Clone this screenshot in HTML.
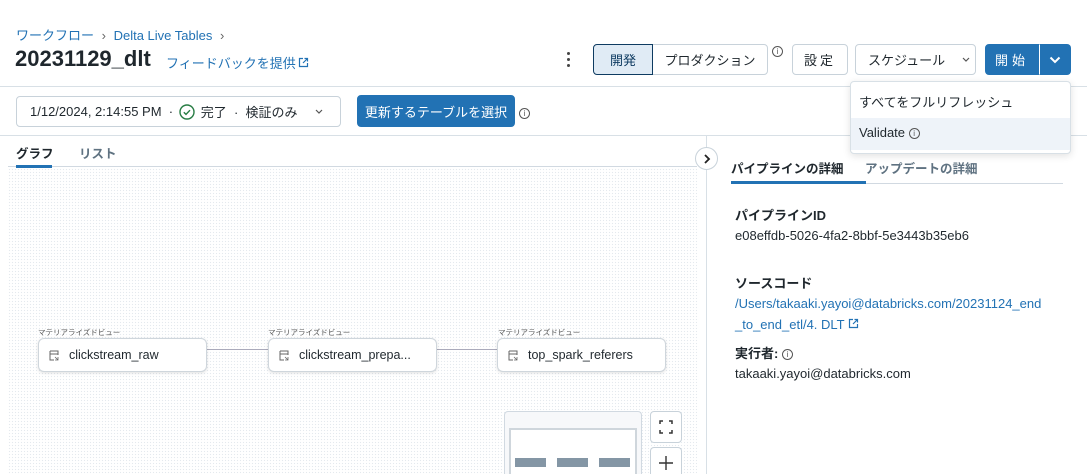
<!DOCTYPE html>
<html><head><meta charset="utf-8"><style>
*{box-sizing:border-box;margin:0;padding:0}
html{width:1087px;height:474px;overflow:hidden}
body{width:1087px;height:474px;overflow:hidden;background:#fff;font-family:"Liberation Sans","Noto Sans CJK JP",sans-serif;color:#1f272d;position:relative;font-size:13px}
.a{position:absolute;white-space:nowrap}
.link{color:#2272b4}
.btn{position:absolute;border:1px solid #c8d2da;border-radius:4px;display:flex;align-items:center;justify-content:center;font-size:13px;background:#fff;white-space:nowrap}
.blue{background:#2272b4;color:#fff;border-color:#2272b4}
.node{position:absolute;width:169px;height:34px;border:1px solid #cfd6dc;border-radius:6px;background:#fff;box-shadow:0 1px 3px rgba(0,0,0,.12);font-size:12.5px;display:flex;align-items:center;padding-left:30px}
.node svg{position:absolute;left:10px;top:11px}
.nl{position:absolute;font-size:7.5px;color:#555}
.info{display:inline-block;width:11px;height:11px;border:1px solid #555;border-radius:50%;font-size:8px;line-height:9px;text-align:center;color:#555;vertical-align:middle}
</style></head><body>
<div class="a link" style="left:16px;top:25px;font-size:13px">ワークフロー <span style="color:#666;margin:0 4px">›</span> Delta Live Tables <span style="color:#666;margin-left:4px">›</span></div>
<div class="a" style="left:15px;top:46px;font-size:22px;font-weight:bold">20231129_dlt</div>
<div class="a link" style="left:166px;top:53px;font-size:13px">フィードバックを提供<svg width="11" height="11" viewBox="0 0 11 11" style="margin-left:2px"><path d="M5 1.5H1.5v8h8V6M6.5 1.5h3v3M9.5 1.5 5 6" fill="none" stroke="#2272b4" stroke-width="1.2"/></svg></div>

<div class="a" style="left:567px;top:52px;width:4px"><div style="width:3px;height:3px;background:#444;border-radius:50%;margin-bottom:3px"></div><div style="width:3px;height:3px;background:#444;border-radius:50%;margin-bottom:3px"></div><div style="width:3px;height:3px;background:#444;border-radius:50%"></div></div>
<div class="btn" style="left:593px;top:44px;width:60px;height:31px;background:#e0ebf5;border-color:#0e3b61;border-radius:4px 0 0 4px;color:#0e3b61;z-index:2">開発</div>
<div class="btn" style="left:652px;top:44px;width:116px;height:31px;border-radius:0 4px 4px 0">プロダクション</div>
<div class="a" style="left:772px;top:43px"><span class="info">i</span></div>
<div class="btn" style="left:792px;top:44px;width:56px;height:31px;letter-spacing:3px">設定</div>
<div class="btn" style="left:855px;top:44px;width:121px;height:31px;justify-content:flex-start;padding-left:12px">スケジュール<svg width="10" height="6" style="margin-left:16px;flex:none" viewBox="0 0 10 6"><path d="M2 1l3 3 3-3" fill="none" stroke="#555" stroke-width="1.2"/></svg></div>
<div class="btn blue" style="left:985px;top:44px;width:54px;height:31px;border-radius:4px 0 0 4px;letter-spacing:4px">開始</div>
<div class="btn blue" style="left:1039px;top:44px;width:32px;height:31px;border-radius:0 4px 4px 0;border-left:1px solid #fff"><svg width="12" height="8" viewBox="0 0 12 8"><path d="M1.5 1.5 6 6l4.5-4.5" fill="none" stroke="#fff" stroke-width="2"/></svg></div>

<div class="a" style="left:0;top:86px;width:1087px;height:1px;background:#d8e0e6"></div>

<div class="btn" style="left:16px;top:96px;width:325px;height:31px;justify-content:flex-start;padding-left:13px">1/12/2024, 2:14:55 PM &nbsp;·&nbsp; <svg width="16" height="16" viewBox="0 0 16 16" style="margin:0 6px 0 2px"><circle cx="8" cy="8" r="7" fill="none" stroke="#277c43" stroke-width="1.4"/><path d="M4.8 8.2l2.2 2.2 4-4.2" fill="none" stroke="#277c43" stroke-width="1.4"/></svg>完了 &nbsp;·&nbsp; 検証のみ<svg width="10" height="6" style="margin-left:16px" viewBox="0 0 10 6"><path d="M2 1l3 3 3-3" fill="none" stroke="#555" stroke-width="1.2"/></svg></div>
<div class="btn blue" style="left:357px;top:95px;width:158px;height:32px">更新するテーブルを選択</div>
<div class="a" style="left:519px;top:105px"><span class="info">i</span></div>

<div class="a" style="left:0;top:135px;width:1087px;height:1px;background:#d8e0e6"></div>

<div class="a" style="left:16px;top:143px;font-weight:bold;font-size:12.5px">グラフ</div>
<div class="a" style="left:79px;top:143px;font-weight:bold;font-size:12.5px;color:#5f7281">リスト</div>
<div class="a" style="left:8px;top:166px;width:689px;height:1px;background:#d1d9e1"></div>
<div class="a" style="left:16px;top:165px;width:36px;height:3px;background:#2272b4"></div>
<div class="a" style="left:8px;top:168px;width:689px;height:306px;background-image:radial-gradient(circle,#e4e9ee 0.7px,transparent 0.8px);background-size:3px 3px"></div>
<div class="a" style="left:706px;top:135px;width:1px;height:339px;background:#d8e0e6"></div>
<div class="a" style="left:695px;top:147px;width:23px;height:23px;border:1px solid #c8d2da;border-radius:50%;background:#fff;display:flex;align-items:center;justify-content:center"><svg width="8" height="10" viewBox="0 0 8 10"><path d="M2 1l4 4-4 4" fill="none" stroke="#222" stroke-width="1.8"/></svg></div>

<div class="nl" style="left:38px;top:327px">マテリアライズドビュー</div>
<div class="nl" style="left:268px;top:327px">マテリアライズドビュー</div>
<div class="nl" style="left:498px;top:327px">マテリアライズドビュー</div>
<div class="a" style="left:207px;top:349px;width:61px;height:1px;background:#aab"></div>
<div class="a" style="left:437px;top:349px;width:61px;height:1px;background:#aab"></div>
<div class="node" style="left:38px;top:338px"><svg width="10" height="11" viewBox="0 0 10 11"><path d="M1 1h8v4M1 1v9h4M1 4h8" fill="none" stroke="#666"/><path d="M6 7l3 3M9 7v3H6" fill="none" stroke="#666" stroke-width=".8"/></svg>clickstream_raw</div>
<div class="node" style="left:268px;top:338px"><svg width="10" height="11" viewBox="0 0 10 11"><path d="M1 1h8v4M1 1v9h4M1 4h8" fill="none" stroke="#666"/><path d="M6 7l3 3M9 7v3H6" fill="none" stroke="#666" stroke-width=".8"/></svg>clickstream_prepa...</div>
<div class="node" style="left:497px;top:338px"><svg width="10" height="11" viewBox="0 0 10 11"><path d="M1 1h8v4M1 1v9h4M1 4h8" fill="none" stroke="#666"/><path d="M6 7l3 3M9 7v3H6" fill="none" stroke="#666" stroke-width=".8"/></svg>top_spark_referers</div>

<div class="a" style="left:504px;top:411px;width:138px;height:63px;border:1px solid #d1d9e1;border-bottom:none;border-radius:4px 4px 0 0;background:#f7f8fa"></div>
<div class="a" style="left:509px;top:428px;width:128px;height:46px;border:2px solid #cfd6dc;border-bottom:none;background:#fff"></div>
<div class="a" style="left:515px;top:458px;width:31px;height:9px;background:#8496a5"></div>
<div class="a" style="left:557px;top:458px;width:31px;height:9px;background:#8496a5"></div>
<div class="a" style="left:599px;top:458px;width:31px;height:9px;background:#8496a5"></div>
<div class="btn" style="left:650px;top:411px;width:32px;height:32px"><svg width="14" height="14" viewBox="0 0 14 14"><path d="M1 4V1h3M10 1h3v3M13 10v3h-3M4 13H1v-3" fill="none" stroke="#333" stroke-width="1.5"/></svg></div>
<div class="btn" style="left:650px;top:447px;width:32px;height:27px;border-bottom:none;border-radius:4px 4px 0 0;align-items:flex-start;padding-top:7px"><svg width="16" height="16" viewBox="0 0 16 16"><path d="M8 1v14M1 8h14" stroke="#333" stroke-width="1.4"/></svg></div>

<div class="a" style="left:731px;top:158px;font-weight:bold;font-size:12.5px">パイプラインの詳細</div>
<div class="a" style="left:865px;top:158px;font-weight:bold;font-size:12.5px;color:#5f7281">アップデートの詳細</div>
<div class="a" style="left:731px;top:183px;width:332px;height:1px;background:#d1d9e1"></div>
<div class="a" style="left:731px;top:181px;width:135px;height:3px;background:#2272b4"></div>

<div class="a" style="left:735px;top:205px;font-weight:bold">パイプラインID</div>
<div class="a" style="left:735px;top:228px">e08effdb-5026-4fa2-8bbf-5e3443b35eb6</div>
<div class="a" style="left:735px;top:273px;font-weight:bold">ソースコード</div>
<div class="a link" style="left:735px;top:296px">/Users/takaaki.yayoi@databricks.com/20231124_end</div>
<div class="a link" style="left:735px;top:317px">_to_end_etl/4. DLT<svg width="11" height="11" viewBox="0 0 11 11" style="margin-left:3px"><path d="M5 1.5H1.5v8h8V6M6.5 1.5h3v3M9.5 1.5 5 6" fill="none" stroke="#2272b4" stroke-width="1.2"/></svg></div>
<div class="a" style="left:735px;top:343px;font-weight:bold">実行者: <span class="info" style="font-weight:normal">i</span></div>
<div class="a" style="left:735px;top:366px">takaaki.yayoi@databricks.com</div>

<div class="a" style="left:850px;top:81px;width:221px;height:73px;background:#fff;border:1px solid #d8e0e6;border-radius:4px;box-shadow:0 2px 8px rgba(0,0,0,.12)">
<div style="position:absolute;left:8px;top:10px">すべてをフルリフレッシュ</div>
<div style="position:absolute;left:0;top:36px;width:219px;height:32px;background:#eef3f9;padding:7px 0 0 8px">Validate <span class="info">i</span></div>
</div>
</body></html>
